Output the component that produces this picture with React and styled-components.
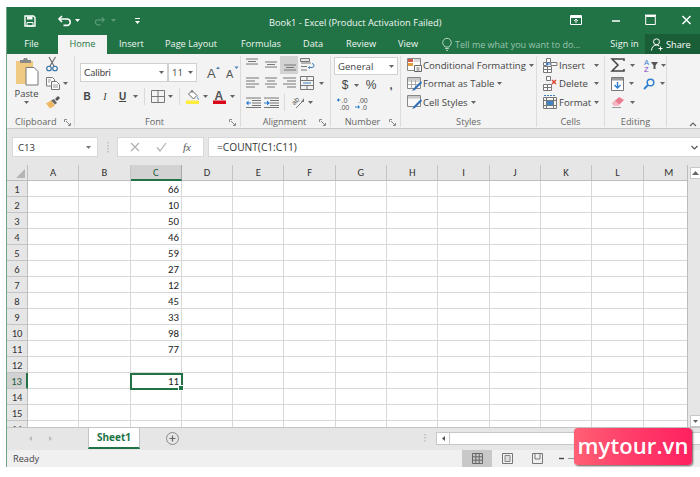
import React from "react";
import styled, { createGlobalStyle } from "styled-components";

const Global = createGlobalStyle`
  html, body { margin: 0; padding: 0; background: #fff; }
  body { width: 700px; height: 477px; overflow: hidden; font-family: "Open Sans", "Liberation Sans", sans-serif; }
  svg { display: block; flex: none; overflow: visible; }
`;

const Page = styled.div`
  width: 700px; height: 477px; padding: 7px 0 10px 6px; box-sizing: border-box; position: relative; overflow: hidden;
`;
const Win = styled.div`
  height: 460px; display: flex; flex-direction: column; border-left: 1px solid #6fa487; background: #e6e6e6;
`;
const TitleBar = styled.div`
  height: 27px; flex: none; background: #217346; color: #fff; display: flex; align-items: center; position: relative; font-size: 9.3px;
`;
const Qat = styled.div`
  display: flex; align-items: center; margin-left: ${p => p.$l}px;
`;
const Title = styled.div`
  position: absolute; left: 262px; top: 9px; line-height: 14px; white-space: nowrap; color: #f2f7f4;
`;
const WinBtn = styled.div`
  position: absolute; left: ${p => p.$x}px; top: 8px;
`;
const TabRow = styled.div`
  height: 20px; flex: none; background: #217346; color: #fff; display: flex; align-items: flex-end; font-size: 9.2px; position: relative;
`;
const Tab = styled.div`
  height: 19px; line-height: 18px; margin-left: ${p => p.$l}px; white-space: nowrap; text-align: center;
  width: ${p => p.$w}px; flex: none; color: ${p => (p.$on ? "#217346" : "#f0f6f2")}; background: ${p => (p.$on ? "#f3f3f3" : "transparent")};
`;
const Tell = styled.div`
  display: flex; align-items: center; gap: 3px; margin-left: 24px; height: 19px; color: #9cc4ae; white-space: nowrap; width: 144px; flex: none; font-size: 9px;
`;
const Share = styled.div`
  position: absolute; right: 0; top: 0; width: 55px; height: 20px; background: #1a5e38; display: flex; align-items: center; gap: 3px; padding-left: 6px; box-sizing: border-box;
`;
const Ribbon = styled.div`
  height: 74px; flex: none; background: #f3f3f3; border-bottom: 1px solid #c8c8c8; display: flex; color: #444; font-size: 9.6px; position: relative;
`;
const Group = styled.div`
  width: ${p => p.$w}px; flex: none; box-sizing: border-box; height: 71px; margin-top: 2px; display: flex; flex-direction: column; position: relative;
  border-right: 1px solid #dcdcdc;
`;
const GroupBody = styled.div`
  height: 59px; flex: none; display: ${p => p.$d || "block"};
`;
const GroupLabel = styled.div`
  height: 12px; line-height: 13px; font-size: 9.2px; color: #666; text-align: ${p => (p.$left ? "left" : "center")}; padding-left: ${p => p.$pl || 0}px; padding-right: ${p => p.$pr || 0}px; white-space: nowrap;
`;
const Launcher = styled.div`
  position: absolute; right: ${p => p.$r ?? 4}px; bottom: 1px;
`;
const PasteCol = styled.div`
  width: 39px; display: flex; flex-direction: column; align-items: center; padding-top: 1px; color: #444; flex: none;
`;
const PasteText = styled.div`
  font-size: 9.4px; line-height: 12px; margin-top: -1px; margin-bottom: 1px;
`;
const SmallCol = styled.div`
  display: flex; flex-direction: column; gap: 5px;
`;
const Row = styled.div`
  display: flex; align-items: center; height: ${p => p.$h || 18}px; gap: ${p => p.$g || 0}px; padding-left: ${p => p.$l || 0}px; margin-top: ${p => p.$t || 0}px;
`;
const Select = styled.div`
  height: ${p => p.$h || 18}px; width: ${p => p.$w}px; flex: none; box-sizing: border-box; background: #fff; border: 1px solid #d0d0d0; display: flex; align-items: center; justify-content: space-between; padding: 0 3px; font-size: ${p => p.$fs || 9.6}px; color: #444; font-family: ${p => p.$font || "inherit"};
`;
const Spacer = styled.div`
  width: ${p => p.$w}px; flex: none;
`;
const VSep = styled.div`
  width: 1px; height: 17px; background: #dadada; flex: none; margin: 0 ${p => p.$m ?? 5}px;
`;
const TBtn = styled.div`
  width: ${p => p.$w || 18}px; height: 18px; flex: none; display: flex; align-items: center; justify-content: center; font-family: ${p => p.$serif ? '"Liberation Serif", serif' : '"Liberation Sans", sans-serif'}; font-weight: ${p => (p.$b ? 700 : 400)}; font-style: ${p => (p.$i ? "italic" : "normal")}; text-decoration: ${p => (p.$u ? "underline" : "none")}; font-size: ${p => p.$fs || 10}px; color: #444; background: ${p => (p.$on ? "#d2d2d2" : "transparent")};
`;
const ListItem = styled.div`
  display: flex; align-items: center; height: 18.5px; white-space: nowrap; padding-left: ${p => p.$l || 6}px; gap: ${p => p.$g ?? 1}px; color: #444;
`;
const ListText = styled.span`
  width: ${p => p.$w || "auto"}; display: inline-block; flex: none;
`;

const FormulaArea = styled.div`
  height: 36px; flex: none; background: #e6e6e6; display: flex; align-items: flex-start; padding-top: 8px; box-sizing: border-box; padding-left: 5px;
`;
const NameBox = styled.div`
  width: 86px; height: 20px; background: #fff; box-sizing: border-box; border: 1px solid #d8d8d8; display: flex; align-items: center; justify-content: space-between; padding: 0 6px 0 5px; font-size: 9.6px; color: #333; flex: none;
`;
const Dots = styled.div`
  width: 19px; flex: none; height: 20px; display: flex; align-items: center; justify-content: center;
`;
const FxBox = styled.div`
  width: 87px; height: 20px; flex: none; background: #fff; border: 1px solid #d8d8d8; box-sizing: border-box; display: flex; align-items: center; justify-content: space-around; padding: 0 4px; color: #aaa;
`;
const FxText = styled.span`
  font-family: "Liberation Serif", serif; font-style: italic; font-size: 11px; color: #555;
`;
const FormulaInput = styled.div`
  margin-left: 4px; flex: 1; height: 20px; background: #fff; border: 1px solid #d8d8d8; border-right: 0; box-sizing: border-box; display: flex; align-items: center; justify-content: space-between; padding: 0 2px 0 8px; font-size: 10.2px; color: #333;
`;

const SheetArea = styled.div`
  height: 262px; flex: none; display: flex; overflow: hidden;
`;
const Grid = styled.div`
  width: 681px; flex: none; position: relative; background: #fff; display: grid; grid-template-columns: 21px repeat(13, 51.3px); grid-auto-rows: 16.03px; overflow: hidden; font-family: "Carlito", "Lato", "Liberation Sans", sans-serif; border-right: 1px solid #bcbcbc; box-sizing: border-box;
`;
const Corner = styled.div`
  background: #e6e6e6; border-right: 1px solid #bdbdbd; border-bottom: 1px solid #bdbdbd; box-sizing: border-box; display: flex; justify-content: flex-end; align-items: flex-end; padding: 0 2px 2px 0;
`;
const ColHead = styled.div`
  box-sizing: border-box; background: ${p => (p.$on ? "#d2d2d2" : "#e6e6e6")}; border-right: 1px solid ${p => (p.$on ? "#a9a9a9" : "#c4c4c4")}; border-bottom: ${p => (p.$on ? "2px solid #217346" : "1px solid #bdbdbd")}; text-align: center; font-size: 10.6px; line-height: 15px; color: ${p => (p.$on ? "#1d5c38" : "#333")};
`;
const RowHead = styled.div`
  box-sizing: border-box; background: ${p => (p.$on ? "#d2d2d2" : "#e6e6e6")}; border-right: ${p => (p.$on ? "2px solid #217346" : "1px solid #bdbdbd")}; border-bottom: 1px solid #c4c4c4; text-align: center; font-size: 10.6px; line-height: 18px; overflow: hidden; color: ${p => (p.$on ? "#1d5c38" : "#333")};
`;
const Cell = styled.div`
  box-sizing: border-box; border-right: 1px solid #d8d8d8; border-bottom: 1px solid #d8d8d8; text-align: right; padding-right: 2px; font-size: 10.8px; line-height: 18px; color: #222; overflow: hidden;
`;
const Selection = styled.div`
  position: absolute; left: 122.5px; top: 207.5px; width: 53px; height: 17.5px; box-sizing: border-box; border: 2px solid #217346; pointer-events: none;
`;
const Handle = styled.div`
  position: absolute; right: -3px; bottom: -3px; width: 4px; height: 4px; background: #217346; border: 1px solid #fff; box-sizing: content-box;
`;
const VScroll = styled.div`
  flex: 1; background: #e6e6e6; display: flex; flex-direction: column; justify-content: space-between; align-items: stretch; padding: 2px 0 0 2px;
`;
const ScrollBtn = styled.div`
  height: 10px; background: #fff; border: 1px solid #c8c8c8; border-right: 0; display: flex; align-items: center; justify-content: center;
`;
const SheetBar = styled.div`
  height: 23px; flex: none; background: #e6e6e6; border-top: 1px solid #c4c4c4; box-sizing: border-box; display: flex; align-items: flex-start; position: relative;
`;
const NavArrows = styled.div`
  width: 81px; flex: none; padding-left: 22px; box-sizing: border-box; display: flex; gap: 17px; height: 21px; align-items: center;
`;
const SheetTab = styled.div`
  width: 52px; height: 21px; flex: none; background: #fff; border: 1px solid #c4c4c4; border-top: 0; border-bottom: 2px solid #217346; box-sizing: border-box; color: #217346; font-weight: 700; font-size: 10px; text-align: center; line-height: 18px;
`;
const PlusWrap = styled.div`
  margin-left: 26px; height: 21px; display: flex; align-items: center; flex: none;
`;
const HDots = styled.div`
  margin-left: 245px; height: 21px; display: flex; align-items: center; flex: none;
`;
const HScroll = styled.div`
  margin-left: 10px; margin-top: 4px; flex: 1; height: 13px; display: flex; background: #fff; border: 1px solid #c8c8c8; border-right: 0; box-sizing: border-box;
`;
const HBtn = styled.div`
  width: 12px; height: 11px; border-right: 1px solid #c8c8c8; display: flex; align-items: center; justify-content: center; flex: none;
`;
const Status = styled.div`
  height: 17px; flex: none; background: #f0f0f0; display: flex; align-items: center; font-size: 9.2px; color: #444; position: relative;
`;
const Ready = styled.div`
  padding-left: 6px; width: 455px; flex: none; box-sizing: border-box;
`;
const ViewBtn = styled.div`
  width: 30px; height: 17px; flex: none; display: flex; align-items: center; justify-content: center; background: ${p => (p.$on ? "#c8c8c8" : "transparent")};
`;
const ZoomBar = styled.div`
  display: flex; align-items: center; margin-left: 7px; gap: 4px; flex: none;
`;
const ZoomTrack = styled.div`
  width: 60px; height: 1px; background: #999;
`;
const Badge = styled.div`
  position: absolute; left: 574px; top: 428px; width: 118px; height: 37px; border-radius: 4px; background: linear-gradient(90deg, #ff6074 0%, #ff3f6a 45%, #ff2160 100%); box-shadow: 1px 1px 2px rgba(70,50,50,.75); color: #fff; font-weight: 600; font-size: 22px; line-height: 35px; text-align: center; letter-spacing: 0.1px; white-space: nowrap;
`;

const Caret = ({ c = "#666", s = 5 }) => (
  <svg width={s} height={3} viewBox="0 0 5 3"><path d="M0 0h5L2.500 3z" fill={c} /></svg>
);
const CaretBox = styled.span`
  display: inline-flex; margin-left: ${p => p.$l ?? 3}px; flex: none; align-items: center;
`;
const Car = ({ l, c }) => <CaretBox $l={l}><Caret c={c} /></CaretBox>;

const LauncherIcon = () => (
  <svg width="7" height="7" viewBox="0 0 7 7"><path d="M.5 3V.5H3M6.500 4v2.500H4" fill="none" stroke="#8a8a8a" /><path d="M2 2l4 4" stroke="#8a8a8a" /></svg>
);
const Lines = ({ ys, w = 16, h = 14, stroke = "#777" }) => (
  <svg width={w} height={h} viewBox={`0 0 ${w} ${h}`}>
    {ys.map(([x1, x2, y], i) => <path key={i} d={`M${x1} ${y}H${x2}`} stroke={stroke} strokeWidth="1" />)}
  </svg>
);
const SaveIcon = () => (
  <svg width="12" height="12" viewBox="0 0 12 12"><path d="M1 1h8.500L11 2.500V11H1z" fill="none" stroke="#fff" strokeWidth="1.400" /><path d="M3 1.500h5.500v3H3z" fill="#fff" /><path d="M3 7.500h6V11H3z" fill="none" stroke="#fff" /></svg>
);
const Undo = ({ c = "#fff" }) => (
  <svg width="14" height="11" viewBox="0 0 14 11"><path d="M4 1L1 4l3 3" fill="none" stroke={c} strokeWidth="1.600" /><path d="M1.500 4H9a3.200 3.200 0 0 1 0 6.400H5.500" fill="none" stroke={c} strokeWidth="1.600" /></svg>
);
const Redo = () => (
  <svg width="11" height="10" viewBox="0 0 14 11"><path d="M10 1l3 3-3 3" fill="none" stroke="#5b9a79" strokeWidth="1.500" /><path d="M12.500 4H5a3.200 3.200 0 0 0 0 6.400h3.500" fill="none" stroke="#5b9a79" strokeWidth="1.500" /></svg>
);
const PasteIcon = () => (
  <svg width="24" height="32" viewBox="0 0 24 32">
    <path d="M1 4h17v23H1z" fill="#f0c983" />
    <path d="M5 3h3l1-2h3l1 2h3v3H5z" fill="#8a8a8a" />
    <path d="M11 10.500h8l4 4V28H11z" fill="#fff" stroke="#777" />
  </svg>
);
const CutIcon = () => (
  <svg width="12" height="16" viewBox="0 0 12 16"><path d="M3 1l5 9M9.500 1L4 10" stroke="#666" strokeWidth="1.100" fill="none" /><circle cx="3" cy="12.500" r="2.300" fill="none" stroke="#2f6f9f" strokeWidth="1.100" /><circle cx="9" cy="12.500" r="2.300" fill="none" stroke="#2f6f9f" strokeWidth="1.100" /></svg>
);
const CopyIcon = () => (
  <svg width="14" height="13" viewBox="0 0 14 13"><path d="M.5.500h6l2 2V9h-8z" fill="#fff" stroke="#777" /><path d="M5.500 4.500h5l3 3v5h-8z" fill="#fff" stroke="#777" /><path d="M2 3h3M2 5h2M7 8h5M7 10h5" stroke="#999" /></svg>
);
const PainterIcon = () => (
  <svg width="14" height="13" viewBox="0 0 14 13"><path d="M0 7.500l5-3 4 5-5 3z" fill="#eeb862" /><path d="M5 4.500l4 4 2-1.500-3-4z" fill="#666" /><path d="M9 3l3-3 2 2-3 3z" fill="#555" /></svg>
);
const GrowA = ({ fs, up }) => (
  <svg width="13" height="13" viewBox="0 0 13 13">
    <text x="0" y="12" fontFamily="Liberation Sans" fontSize={fs} fill="#555">A</text>
    <path d={up ? "M9 3l2-2.500L13 3z" : "M8.500 .5h4l-2 2.500z"} fill="#4a7fb5" />
  </svg>
);
const BorderIcon = () => (
  <svg width="14" height="13" viewBox="0 0 14 13"><path d="M.5.500h13v12H.5zM7 .5v12M.5 6.500h13" fill="none" stroke="#777" /></svg>
);
const FillIcon = () => (
  <svg width="14" height="15" viewBox="0 0 14 15"><path d="M6 1.500l5 5-3.500 3.500-5-5z" fill="#fff" stroke="#666" /><path d="M6 1V4" stroke="#666" /><path d="M11 7l2 3-1 1z" fill="#3f83c4" /><path d="M0 11.500h13V15H0z" fill="#ffec3d" /></svg>
);
const ColorA = () => (
  <svg width="14" height="15" viewBox="0 0 14 15"><text x="1.500" y="10.500" fontFamily="Liberation Sans" fontWeight="700" fontSize="12" fill="#555">A</text><path d="M0 11.500h13V15H0z" fill="#d9081b" /></svg>
);
const alignTop = [[1, 13, 1], [3, 11, 3.5], [1, 13, 6]];
const alignMid = [[2, 14, 4], [4, 12, 6.5], [2, 14, 9]];
const alignBot = [[3, 15, 7], [5, 13, 9.5], [3, 15, 12]];
const WrapIcon = () => (
  <svg width="15" height="14" viewBox="0 0 15 14"><path d="M1 5h10M1 8.500h6M1 12h6" stroke="#777" /><path d="M.5.500h9v3h-9z" fill="#e6e6e6" stroke="#777" /><path d="M8 9.500h4a1.500 1.500 0 0 0 0-4" fill="none" stroke="#3f7fbf" /><path d="M10 8l-2 1.500 2 1.500z" fill="#3f7fbf" /></svg>
);
const MergeIcon = () => (
  <svg width="14" height="14" viewBox="0 0 14 14"><path d="M.5.500h13v13H.5zM.5 4.500h13M.5 9.500h13M7 .5v4M7 9.500v4" fill="none" stroke="#777" /><path d="M3 7h8" stroke="#3f7fbf" /></svg>
);
const IndentIcon = ({ flip }) => (
  <svg width="15" height="11" viewBox="0 0 15 11">
    <path d="M0 1h15M6 3.500h9M6 6h9M6 8.500h9M0 10.500h15" stroke="#777" />
    <path d={flip ? "M0 5.500h3V3.500l3 2.500-3 2.500V6.500H0z" : "M5 5.500H2.500V3.500L0 6l2.500 2.500V6.500H5z"} fill="#2f7fd0" />
  </svg>
);
const OrientIcon = () => (
  <svg width="14" height="14" viewBox="0 0 14 14"><text x="1" y="9" fontFamily="Liberation Sans" fontSize="7" fill="#555" transform="rotate(-45 4 7)">ab</text><path d="M5 13l8-8" stroke="#777" /><path d="M13 3v4h-3z" fill="#777" /></svg>
);
const DecInc = () => (
  <svg width="13" height="13" viewBox="0 0 13 13"><path d="M0 3h3.500" stroke="#2f7fd0" /><path d="M2 1L0 3l2 2z" fill="#2f7fd0" /><text x="4.500" y="6" fontFamily="Liberation Sans" fontSize="7" fill="#555">.0</text><text x="2.500" y="12.500" fontFamily="Liberation Sans" fontSize="7" fill="#555">.00</text></svg>
);
const DecDec = () => (
  <svg width="13" height="13" viewBox="0 0 13 13"><text x="3" y="6" fontFamily="Liberation Sans" fontSize="7" fill="#555">.00</text><path d="M0 10h3.500" stroke="#2f7fd0" /><path d="M3 8l2 2-2 2z" fill="#2f7fd0" /><text x="6" y="12.500" fontFamily="Liberation Sans" fontSize="7" fill="#555">.0</text></svg>
);
const CondIcon = () => (
  <svg width="15" height="14" viewBox="0 0 15 14"><path d="M.5.500h13v12H.5z" fill="#fff" stroke="#888" /><path d="M1 1h5v3H1z" fill="#d3584a" /><path d="M1 5h5v3H1z" fill="#e89b3a" /><path d="M7 1h6v3H7z" fill="#d9d9d9" /><path d="M7.500 7.500h7v6h-7z" fill="#fff" stroke="#666" /><path d="M9.500 10h3M9.500 12h3" stroke="#666" /></svg>
);
const TableIcon = ({ plain }) => (
  <svg width="15" height="14" viewBox="0 0 15 14"><path d="M.5.500h13v11H.5z" fill={plain ? "#f8f8f8" : "#fff"} stroke="#888" />{!plain && <path d="M4.500 1v10M8.500 1v10M1 4h12M1 7.500h12" stroke="#aaa" />}{plain && <path d="M1 3h12" stroke="#bbb" />}<path d="M1 1h12v2H1z" fill="#c9c9c9" /><path d="M14 4l-7 7-2 3 3-1 7-7z" fill="#2f6fb5" /></svg>
);
const CellAdd = ({ x }) => (
  <svg width="14" height="15" viewBox="0 0 14 15"><path d="M3.500.500h4v4h-4zM.5 8.500h4v3h-4zM4.500 8.500h4v3h-4zM.5 11.500h4v3h-4zM4.500 11.500h4v3h-4z" fill="#fff" stroke="#777" />
    {x ? <path d="M9 4l4 4M13 4l-4 4" stroke="#d8402f" strokeWidth="1.400" /> : <><path d="M.5 4.500h3v3h-3zM8 4.500h6v3H8z" fill="#fff" stroke="#777" /><path d="M3 6h5" stroke="#2f7fd0" /><path d="M5 4L3 6l2 2z" fill="#2f7fd0" /></>}
  </svg>
);
const FormatCell = () => (
  <svg width="14" height="14" viewBox="0 0 14 14"><path d="M.5 2.500h13v11H.5zM.5 5.500h13M.5 10.500h13M3.500 2.500v11M10.500 2.500v11" fill="#f5f5f5" stroke="#777" /><path d="M4 6h6v4H4z" fill="#3f83c4" /><path d="M1 .5h12" stroke="#3f83c4" strokeDasharray="2 1" /></svg>
);
const Sigma = () => (
  <svg width="14" height="14" viewBox="0 0 14 14"><path d="M13 3V1H1l6 6-6 6h12v-2" fill="none" stroke="#444" strokeWidth="1.500" /></svg>
);
const SortIcon = () => (
  <svg width="15" height="15" viewBox="0 0 15 15"><text x="0" y="6.500" fontFamily="Liberation Sans" fontSize="7.500" fill="#2f7fd0">A</text><text x="0" y="14" fontFamily="Liberation Sans" fontSize="7.500" fill="#7a3fbf">Z</text><path d="M7 4h7l-2.500 3.500V11h-2V7.500z" fill="#555" /></svg>
);
const FillDown = () => (
  <svg width="13" height="14" viewBox="0 0 13 14"><path d="M.5.500h12v13H.5z" fill="#fff" stroke="#777" /><path d="M1 1h11v2.500H1z" fill="#999" /><path d="M6.500 5v6M3.500 8l3 3 3-3" fill="none" stroke="#2f7fd0" strokeWidth="1.400" /></svg>
);
const FindIcon = () => (
  <svg width="12" height="12" viewBox="0 0 12 12"><circle cx="7.500" cy="4.500" r="3.300" fill="none" stroke="#2f7fd0" strokeWidth="1.500" /><path d="M5 7L1 11" stroke="#2f7fd0" strokeWidth="1.800" /></svg>
);
const Eraser = () => (
  <svg width="15" height="12" viewBox="0 0 15 12"><path d="M1 7.500L8 1l5 3-6 6H3.500z" fill="#ea7c90" /><path d="M1 7.500L3.500 10H7l1.500-1.500L4 5z" fill="#f3b9c3" /><path d="M1 11.500h9" stroke="#999" /></svg>
);

const tabs = [["Insert", 12, 23], ["Page Layout", 23, 52], ["Formulas", 24, 39], ["Data", 23, 19], ["Review", 24, 29], ["View", 23, 20]];
const cols = "ABCDEFGHIJKLM".split("");
const values = { 1: 66, 2: 10, 3: 50, 4: 46, 5: 59, 6: 27, 7: 12, 8: 45, 9: 33, 10: 98, 11: 77, 13: 11 };
const rows = Array.from({ length: 16 }, (_, i) => i + 1);

export default function App() {
  return (
    <Page>
      <Global />
      <Win>
        <TitleBar>
          <Qat $l={17}><SaveIcon /></Qat>
          <Qat $l={22}><Undo /><Car l={3} c="#fff" /></Qat>
          <Qat $l={14}><Redo /><Car l={6} c="#5b9a79" /></Qat>
          <Qat $l={19}>
            <svg width="5" height="6" viewBox="0 0 5 6"><path d="M0 .5h5" stroke="#fff" /><path d="M0 3h5L2.500 6z" fill="#fff" /></svg>
          </Qat>
          <Title>Book1 - Excel (Product Activation Failed)</Title>
          <WinBtn $x={563}>
            <svg width="12" height="10" viewBox="0 0 12 10"><path d="M.5.500h11v9H.5z" fill="none" stroke="#fff" /><path d="M1 1h10v2H1z" fill="#fff" /><path d="M6 8V4.500M4 6l2-2 2 2" fill="none" stroke="#fff" /></svg>
          </WinBtn>
          <WinBtn $x={605}>
            <svg width="9" height="10" viewBox="0 0 9 10"><path d="M0 6h8" stroke="#fff" strokeWidth="1.500" /></svg>
          </WinBtn>
          <WinBtn $x={638}>
            <svg width="11" height="10" viewBox="0 0 11 10"><path d="M.7 1.500h9.600v8H.7z" fill="none" stroke="#fff" /><path d="M0 .5h11" stroke="#fff" strokeWidth="1.800" /></svg>
          </WinBtn>
          <WinBtn $x={675}>
            <svg width="9" height="10" viewBox="0 0 9 10"><path d="M.5 1l8 8M8.500 1l-8 8" stroke="#fff" strokeWidth="1.500" /></svg>
          </WinBtn>
        </TitleBar>
        <TabRow>
          <Tab $l={17} $w={15}>File</Tab>
          <Tab $l={19} $w={49} $on>Home</Tab>
          {tabs.map(([t, l, w]) => <Tab key={t} $l={l} $w={w}>{t}</Tab>)}
          <Tell>
            <svg width="10" height="13" viewBox="0 0 10 13"><path d="M3 9C2 7.500 .7 6.500 .7 4.600a4.300 4.300 0 0 1 8.600 0C9.300 6.500 8 7.500 7 9zM3.200 10.500h3.600M4 12.300h2" fill="none" stroke="#b5d5c4" /></svg>
            Tell me what you want to do...
          </Tell>
          <Tab $l={24} $w={29}>Sign in</Tab>
          <Share>
            <svg width="12" height="13" viewBox="0 0 12 13"><circle cx="5.500" cy="3.800" r="3" fill="none" stroke="#fff" /><path d="M.5 12.500c0-3 2-5.500 5-5.500 1 0 2 .3 2.700 1" fill="none" stroke="#fff" /><path d="M9.500 8.500v4M7.500 10.500h4" stroke="#fff" /></svg>
            Share
          </Share>
        </TabRow>
        <Ribbon>
          <Group $w={68}>
            <GroupBody $d="flex">
              <PasteCol>
                <PasteIcon />
                <PasteText>Paste</PasteText>
                <CaretBox $l={0}><Caret /></CaretBox>
              </PasteCol>
              <SmallCol>
                <CutIcon />
                <Row $h={13}><CopyIcon /><Car l={3} /></Row>
                <Row $h={13} $t={1}><PainterIcon /></Row>
              </SmallCol>
            </GroupBody>
            <GroupLabel $left $pl={8}>Clipboard</GroupLabel>
            <Launcher $r={3}><LauncherIcon /></Launcher>
          </Group>
          <Group $w={166}>
            <GroupBody>
              <Row $h={19} $l={5} $t={7}>
                <Select $w={88} $h={19} $font='"Lato", sans-serif'>Calibri<Caret /></Select>
                <Select $w={29} $h={19}>11<Caret /></Select>
                <Spacer $w={10} /><GrowA fs={13} up />
                <Spacer $w={6} /><GrowA fs={11} />
              </Row>
              <Row $h={18} $l={3} $t={5}>
                <TBtn $b>B</TBtn><TBtn $i $serif>I</TBtn><TBtn $u $b $w={17}>U</TBtn><Car l={2} />
                <VSep $m={6} />
                <BorderIcon /><Car l={3} />
                <VSep $m={6} />
                <FillIcon /><Car l={3} />
                <Spacer $w={5} /><ColorA /><Car l={3} />
              </Row>
            </GroupBody>
            <GroupLabel $pr={6}>Font</GroupLabel>
            <Launcher><LauncherIcon /></Launcher>
          </Group>
          <Group $w={90}>
            <GroupBody>
              <Row $h={18} $l={3}>
                <TBtn><Lines ys={alignTop} /></TBtn><TBtn><Lines ys={alignMid} /></TBtn><TBtn $on><Lines ys={alignBot} /></TBtn><TBtn><WrapIcon /></TBtn>
              </Row>
              <Row $h={18} $l={3}>
                <TBtn><Lines ys={[[1, 14, 2], [1, 10, 5], [1, 14, 8], [1, 10, 11]]} /></TBtn>
                <TBtn><Lines ys={[[2, 14, 2], [4, 12, 5], [2, 14, 8], [4, 12, 11]]} /></TBtn>
                <TBtn><Lines ys={[[2, 15, 2], [6, 15, 5], [2, 15, 8], [6, 15, 11]]} /></TBtn>
                <TBtn><MergeIcon /></TBtn><Car l={3} />
              </Row>
              <Row $h={18} $l={3} $t={1}>
                <TBtn><IndentIcon /></TBtn><TBtn><IndentIcon flip /></TBtn>
                <VSep $m={4} />
                <TBtn><OrientIcon /></TBtn><Car l={1} />
              </Row>
            </GroupBody>
            <GroupLabel $pr={2}>Alignment</GroupLabel>
            <Launcher><LauncherIcon /></Launcher>
          </Group>
          <Group $w={70}>
            <GroupBody>
              <Row $h={18} $l={3} $t={1}><Select $w={64}>General<Caret /></Select></Row>
              <Row $h={20} $l={8}>
                <TBtn $w={12} $fs={12}>$</TBtn><Car l={3} />
                <TBtn $w={24} $fs={12}>%</TBtn>
                <TBtn $w={16} $b $fs={11}>,</TBtn>
              </Row>
              <Row $h={15} $l={6} $t={1} $g={5}><DecInc /><DecDec /></Row>
            </GroupBody>
            <GroupLabel $pr={6}>Number</GroupLabel>
            <Launcher><LauncherIcon /></Launcher>
          </Group>
          <Group $w={136}>
            <GroupBody>
              <ListItem><CondIcon />Conditional Formatting<Car l={2} /></ListItem>
              <ListItem><TableIcon />Format as Table<Car l={2} /></ListItem>
              <ListItem><TableIcon plain />Cell Styles<Car l={2} /></ListItem>
            </GroupBody>
            <GroupLabel>Styles</GroupLabel>
          </Group>
          <Group $w={68}>
            <GroupBody>
              <ListItem $g={2}><CellAdd /><ListText $w="32px">Insert</ListText><Car l={1} /></ListItem>
              <ListItem $g={2}><CellAdd x /><ListText $w="32px">Delete</ListText><Car l={1} /></ListItem>
              <ListItem $g={2}><FormatCell /><ListText>Format</ListText><Car l={1} /></ListItem>
            </GroupBody>
            <GroupLabel>Cells</GroupLabel>
          </Group>
          <Group $w={62}>
            <GroupBody>
              <ListItem $l={6}><Sigma /><Car l={4} /><Spacer $w={7} /><SortIcon /><Car l={1} /></ListItem>
              <ListItem $l={6}><FillDown /><Car l={4} /><Spacer $w={7} /><FindIcon /><Car l={4} /></ListItem>
              <ListItem $l={6}><Eraser /><Car l={3} /></ListItem>
            </GroupBody>
            <GroupLabel>Editing</GroupLabel>
          </Group>
          <Launcher $r={3}>
            <svg width="8" height="5" viewBox="0 0 8 5"><path d="M1 4l3-3 3 3" fill="none" stroke="#666" strokeWidth="1.200" /></svg>
          </Launcher>
        </Ribbon>
        <FormulaArea>
          <NameBox>C13<Caret c="#777" /></NameBox>
          <Dots><svg width="2" height="11" viewBox="0 0 2 11"><path d="M1 0v11" stroke="#aaa" strokeDasharray="1.500 1.500" /></svg></Dots>
          <FxBox>
            <svg width="10" height="10" viewBox="0 0 10 10"><path d="M1 1l8 8M9 1L1 9" stroke="#b0b0b0" strokeWidth="1.200" /></svg>
            <svg width="11" height="10" viewBox="0 0 11 10"><path d="M1 5.500L4 9l6-8" fill="none" stroke="#b0b0b0" strokeWidth="1.200" /></svg>
            <FxText>fx</FxText>
          </FxBox>
          <FormulaInput>
            =COUNT(C1:C11)
            <svg width="7" height="5" viewBox="0 0 7 5"><path d="M.5 1l3 3 3-3" fill="none" stroke="#555" strokeWidth="1.200" /></svg>
          </FormulaInput>
        </FormulaArea>
        <SheetArea>
          <Grid>
            <Corner><svg width="9" height="9" viewBox="0 0 9 9"><path d="M9 0v9H0z" fill="#b5b5b5" /></svg></Corner>
            {cols.map(c => <ColHead key={c} $on={c === "C"}>{c}</ColHead>)}
            {rows.map(r => (
              <React.Fragment key={r}>
                <RowHead $on={r === 13}>{r}</RowHead>
                {cols.map(c => <Cell key={c}>{c === "C" ? values[r] : ""}</Cell>)}
              </React.Fragment>
            ))}
            <Selection><Handle /></Selection>
          </Grid>
          <VScroll>
            <ScrollBtn><svg width="7" height="4" viewBox="0 0 7 4"><path d="M3.500 0L7 4H0z" fill="#666" /></svg></ScrollBtn>
            <ScrollBtn><Caret s={7} /></ScrollBtn>
          </VScroll>
        </SheetArea>
        <SheetBar>
          <NavArrows>
            <svg width="3" height="5" viewBox="0 0 3 5"><path d="M3 0v5L0 2.500z" fill="#bbb" /></svg>
            <svg width="3" height="5" viewBox="0 0 3 5"><path d="M0 0v5l3-2.500z" fill="#bbb" /></svg>
          </NavArrows>
          <SheetTab>Sheet1</SheetTab>
          <PlusWrap>
            <svg width="13" height="13" viewBox="0 0 13 13"><circle cx="6.500" cy="6.500" r="6" fill="none" stroke="#8a8a8a" /><path d="M6.500 3.500v6M3.500 6.500h6" stroke="#666" strokeWidth="1.200" /></svg>
          </PlusWrap>
          <HDots><svg width="2" height="9" viewBox="0 0 2 9"><path d="M1 0v9" stroke="#aaa" strokeDasharray="1.500 1.500" /></svg></HDots>
          <HScroll>
            <HBtn><svg width="3" height="5" viewBox="0 0 3 5"><path d="M3 0v5L0 2.500z" fill="#555" /></svg></HBtn>
          </HScroll>
        </SheetBar>
        <Status>
          <Ready>Ready</Ready>
          <ViewBtn $on>
            <svg width="11" height="11" viewBox="0 0 11 11"><path d="M.5.500h10v10H.5zM3.800.5v10M7.200.5v10M.5 3.800h10M.5 7.200h10" fill="none" stroke="#666" /></svg>
          </ViewBtn>
          <ViewBtn>
            <svg width="11" height="11" viewBox="0 0 11 11"><path d="M.5.500h10v10H.5z" fill="none" stroke="#777" /><path d="M3 2.500h5v6H3z" fill="#ddd" stroke="#888" /></svg>
          </ViewBtn>
          <ViewBtn>
            <svg width="11" height="11" viewBox="0 0 11 11"><path d="M.5.500h10v10H.5zM3 .5v5.500h5V.5" fill="none" stroke="#777" /></svg>
          </ViewBtn>
          <ZoomBar>
            <svg width="5" height="3" viewBox="0 0 5 3"><path d="M0 1.500h5" stroke="#444" strokeWidth="1.400" /></svg>
            <ZoomTrack />
          </ZoomBar>
        </Status>
      </Win>
      <Badge>mytour.vn</Badge>
    </Page>
  );
}
